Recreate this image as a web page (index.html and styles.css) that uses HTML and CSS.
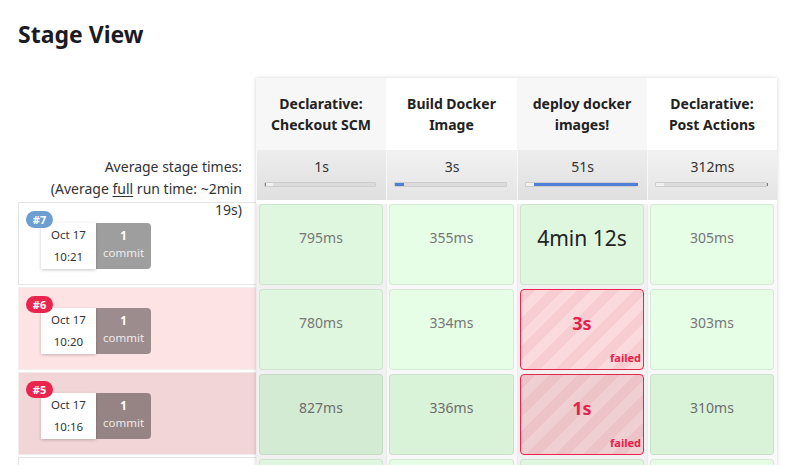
FILE: index.html
```html
<!DOCTYPE html>
<html lang="en">
<head>
<meta charset="utf-8">
<title>Stage View</title>
<link rel="stylesheet" href="styles.css">
</head>
<body>
<div class="page">
  <h2 class="title">Stage View</h2>
  <div class="stage-view">
    <div class="runs">
      <div class="runs-head"></div>
      <div class="avg-label">Average stage times:<br>(Average <u>full</u> run time: ~2min<br>19s)</div>

      <div class="run">
        <span class="badge badge-blue">#7</span>
        <div class="run-meta">
          <div class="date"><div>Oct 17</div><div>10:21</div></div>
          <div class="commit"><b>1</b><span>commit</span></div>
        </div>
      </div>

      <div class="run run-failed">
        <span class="badge badge-red">#6</span>
        <div class="run-meta">
          <div class="date"><div>Oct 17</div><div>10:20</div></div>
          <div class="commit"><b>1</b><span>commit</span></div>
        </div>
      </div>

      <div class="run run-failed-hover">
        <span class="badge badge-red">#5</span>
        <div class="run-meta">
          <div class="date"><div>Oct 17</div><div>10:16</div></div>
          <div class="commit"><b>1</b><span>commit</span></div>
        </div>
      </div>

      <div class="run"></div>
    </div>

    <div class="stages">
      <div class="stage odd">
        <div class="stage-head">Declarative:<br>Checkout SCM</div>
        <div class="stage-avg">1s<div class="bar"><div class="bar-fill" style="margin-left:0;width:1px"></div></div></div>
        <div class="stage-cells">
          <div class="cell">795ms</div>
          <div class="cell">780ms</div>
          <div class="cell hover">827ms</div>
          <div class="cell"></div>
        </div>
      </div>
      <div class="stage wide">
        <div class="stage-head">Build Docker<br>Image</div>
        <div class="stage-avg">3s<div class="bar"><div class="bar-fill" style="margin-left:0;width:9px"></div></div></div>
        <div class="stage-cells">
          <div class="cell">355ms</div>
          <div class="cell">334ms</div>
          <div class="cell hover">336ms</div>
          <div class="cell"></div>
        </div>
      </div>
      <div class="stage odd">
        <div class="stage-head">deploy docker<br>images!</div>
        <div class="stage-avg">51s<div class="bar"><div class="bar-fill" style="margin-left:8px;width:104px"></div></div></div>
        <div class="stage-cells">
          <div class="cell big">4min 12s</div>
          <div class="cell failed">3s<span class="failed-label">failed</span></div>
          <div class="cell failed hover">1s<span class="failed-label">failed</span></div>
          <div class="cell"></div>
        </div>
      </div>
      <div class="stage">
        <div class="stage-head">Declarative:<br>Post Actions</div>
        <div class="stage-avg">312ms<div class="bar"><div class="bar-fill" style="margin-left:111px;width:1px"></div></div></div>
        <div class="stage-cells">
          <div class="cell">305ms</div>
          <div class="cell">303ms</div>
          <div class="cell hover">310ms</div>
          <div class="cell"></div>
        </div>
      </div>
    </div>
  </div>
</div>
</body>
</html>
```
FILE: styles.css
```css
* { box-sizing: border-box; }

html, body {
  margin: 0;
  height: 100%;
  overflow: hidden;
  background: #fff;
}

body {
  font-family: "Noto Sans", "DejaVu Sans", sans-serif;
  color: #1f1f29;
}

.page {
  padding: 19px 0 0 18px;
}

.title {
  margin: 0;
  font-size: 23px;
  font-weight: 700;
  line-height: 30px;
  color: #1b1b24;
}

.stage-view {
  display: flex;
  align-items: flex-start;
  margin-top: 29px;
}

/* ---------- left column ---------- */
.runs {
  width: 238px;
  flex: none;
}

.runs-head { height: 72px; }

.avg-label {
  position: relative;
  z-index: 1;
  height: 52px;
  padding: 6px 14px 0 0;
  text-align: right;
  font-size: 14px;
  line-height: 21.5px;
  color: #333;
  white-space: nowrap;
}

.avg-label u { text-underline-offset: 2px; }

.run {
  height: 83px;
  margin-bottom: 2px;
  padding: 8px 0 0 7px;
  background: #fff;
  border: 1px solid #e4e4e4;
  border-right: none;
}

.run-failed {
  background: #fde3e4;
  border-color: #f3f0f0;
}

.run-failed-hover {
  background: #f2d6d7;
  border-color: #f0eded;
}

.badge {
  position: relative;
  z-index: 1;
  display: block;
  width: 27px;
  height: 17px;
  margin-bottom: -5px;
  border-radius: 9px;
  font-size: 11px;
  font-weight: 700;
  line-height: 17px;
  color: #fff;
  text-align: center;
}

.badge-blue { background: #6d9ed2; }
.badge-red { background: #e9254e; }

.run-meta {
  display: flex;
  margin-left: 15px;
}

.date {
  width: 55px;
  height: 46px;
  padding-top: 1px;
  background: #fff;
  box-shadow: 0 1px 3px rgba(0, 0, 0, 0.22);
  text-align: center;
  font-size: 11.5px;
  line-height: 22px;
  color: #333;
}

.commit {
  width: 55px;
  height: 46px;
  padding-top: 4px;
  background: rgba(0, 0, 0, 0.38);
  border-radius: 0 4px 4px 0;
  text-align: center;
  font-size: 11.5px;
  line-height: 17px;
  color: #fff;
}

.commit b { display: block; }
.commit span { display: block; color: rgba(255, 255, 255, 0.85); }

/* ---------- stage columns ---------- */
.stages {
  display: flex;
  box-shadow: 0 0 4px rgba(0, 0, 0, 0.18);
}

.stage {
  width: 130px;
  flex: none;
}

.stage.wide { width: 131px; }

.stage-head {
  height: 72px;
  display: flex;
  align-items: center;
  justify-content: center;
  text-align: center;
  font-size: 14px;
  font-weight: 700;
  line-height: 21px;
  color: #222;
  background: #fff;
}

.stage.odd .stage-head { background: #f7f7f7; }

.stage-avg {
  height: 50px;
  padding-top: 7px;
  text-align: center;
  font-size: 14px;
  line-height: 20px;
  color: #333;
  background: linear-gradient(#f2f2f2, #e4e4e4);
  border-left: 1px solid #f8f8f8;
}

.stage.odd .stage-avg {
  background: linear-gradient(#ededed, #dfdfdf);
}

.bar {
  height: 5px;
  margin: 5px 10px 0 7px;
  background: linear-gradient(90deg, #f0f0f0 0 8px, #dcdcdc 8px);
  border: 1px solid #cdcdcd;
  border-radius: 1px;
}

.bar-fill {
  height: 100%;
  background: #4f7fd6;
}

.stage-cells {
  height: 300px;
  background: #f8f8f8;
  border-left: 1px solid #ececec;
}

.stage.odd .stage-cells { background: #f1f1f1; }

.cell {
  position: relative;
  height: 81px;
  margin: 4px 3px 0 2px;
  padding-bottom: 14px;
  display: flex;
  align-items: center;
  justify-content: center;
  border: 1px solid rgba(0, 0, 0, 0.07);
  border-radius: 4px;
  background: #e6fde6;
  font-size: 14px;
  color: #777;
}

.stage.odd .cell { background: #dff6df; }

.cell.hover { background: #d9f3d9; color: #6d6d6d; }
.stage.odd .cell.hover { background: #d3ebd3; }

.cell.big {
  font-size: 21px;
  color: #222;
}

.stage .cell.failed {
  border-color: #e8264d;
  color: #e6214a;
  font-size: 18px;
  font-weight: 700;
  background: repeating-linear-gradient(135deg, #f7cdd2 0 10px, #fadadd 10px 20px);
}

.stage .cell.failed.hover {
  background: repeating-linear-gradient(135deg, #ecc3c7 0 10px, #f0cfd2 10px 20px);
}

.failed-label {
  position: absolute;
  right: 2px;
  bottom: 5px;
  font-size: 11px;
  line-height: 13px;
  font-weight: 700;
}
```
